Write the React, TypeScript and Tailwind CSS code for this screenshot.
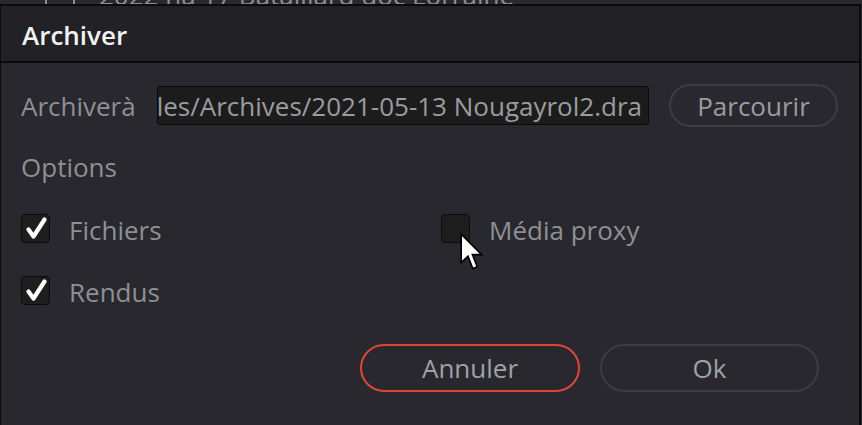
import React from 'react';

const Check: React.FC = () => (
  <svg width="29" height="29" viewBox="0 0 29 29" className="absolute -inset-px">
    <path d="M7.5 15.5 L12.5 22.5 L23.5 5.5" fill="none" stroke="#ffffff" strokeWidth="4.2" strokeLinecap="round" strokeLinejoin="round" />
  </svg>
);

const CheckBox: React.FC<{ checked?: boolean; label: string }> = ({ checked, label }) => (
  <div className="flex items-center h-[29px]">
    <div className="relative w-[29px] h-[29px] rounded-[4px] bg-[#1e1e1f] border border-[#0c0c0d]">
      {checked && <Check />}
    </div>
    <span className="ml-[19px] text-[26px] leading-[34px] text-[#8e9094] mt-[2px]">{label}</span>
  </div>
);

const Cursor: React.FC = () => (
  <svg width="26" height="39" viewBox="0 0 13 19.5" className="absolute left-[460px] top-[233px]">
    <path d="M0.6 0.6 L0.6 14.8 L4 11.6 L6.4 17.8 L8.6 16.9 L6.2 10.8 L10.8 10.8 Z" fill="#ffffff" stroke="#000000" strokeWidth="0.8" strokeLinejoin="miter" />
  </svg>
);

const App: React.FC = () => {
  return (
    <div
      className="relative w-[862px] h-[425px] overflow-hidden bg-[#28282e] flex flex-col"
      style={{ fontFamily: '"Open Sans", "Noto Sans", sans-serif' }}
    >
      {/* window behind the dialog, only its bottom edge shows */}
      <div className="h-[4px] overflow-hidden shrink-0">
        <div className="-mt-[22px] flex items-center gap-[24px] pl-[45px] text-[26px] leading-[34px] text-[#8e9094] whitespace-nowrap">
          <span className="w-[30px] h-[24px] border-2 border-[#8e9094] rounded-[3px]" />
          <span>2022 ha 17 Bataillard doc Lorraine</span>
        </div>
      </div>

      <div className="flex-1 w-[861px] flex flex-col border-t-2 border-l border-r-2 border-[#0b0b0c]">
        <div className="h-[55px] bg-[#212126] pl-[21px] flex items-center">
          <span className="text-[26px] leading-[34px] font-semibold text-[#f2f2f2] mt-[2px]">Archiver</span>
        </div>
        <div className="h-[2px] bg-[#0b0b0c]" />

        <div className="flex-1 bg-[#28282e] pl-[20px] flex flex-col">
          <div className="mt-[21px] h-[43px] flex items-center">
            <span className="w-[136px] text-[26px] leading-[34px] text-[#8e9094]">Archiverà</span>
            <div className="w-[492px] h-[39px] rounded-[3px] bg-[#1c1c1d] border border-[#09090a] flex items-center justify-end overflow-hidden pr-[6px] whitespace-nowrap">
              <span className="text-[26px] leading-[34px] text-[#9a9ca0]">les/Archives/2021-05-13 Nougayrol2.dra</span>
            </div>
            <button className="ml-[20px] w-[169px] h-[43px] rounded-full border-2 border-[#3c3c42] text-[26px] leading-[34px] text-[#9a9ca0] flex items-center justify-center">
              Parcourir
            </button>
          </div>

          <div className="mt-[23px] h-[34px] text-[26px] leading-[34px] text-[#8e9094]">Options</div>

          <div className="mt-[30px] flex">
            <div className="w-[420px] flex flex-col gap-[33px]">
              <CheckBox checked label="Fichiers" />
              <CheckBox checked label="Rendus" />
            </div>
            <div className="flex flex-col">
              <CheckBox label="Média proxy" />
            </div>
          </div>

          <div className="mt-[39px] flex justify-end pr-[40px] gap-[20px]">
            <button className="w-[220px] h-[48px] rounded-full border-2 border-[#de463b] text-[26px] leading-[34px] text-[#a0a2a6] flex items-center justify-center">
              Annuler
            </button>
            <button className="w-[219px] h-[48px] rounded-full border-2 border-[#3c3c42] text-[26px] leading-[34px] text-[#a0a2a6] flex items-center justify-center">
              Ok
            </button>
          </div>
        </div>
      </div>

      <Cursor />
    </div>
  );
};

export default App;
